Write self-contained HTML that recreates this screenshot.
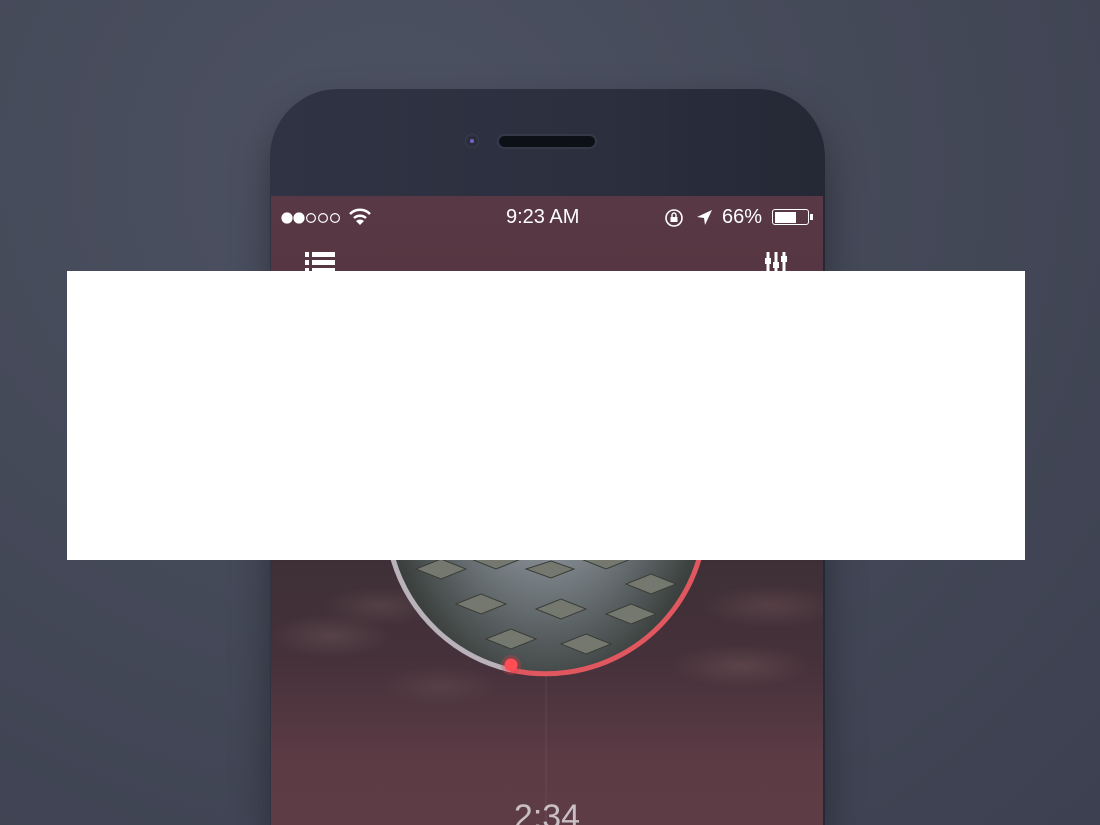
<!DOCTYPE html>
<html><head><meta charset="utf-8"><style>
html,body{margin:0;padding:0;overflow:hidden;width:1100px;height:825px}
body{position:relative;background:radial-gradient(ellipse at 35% 20%,#4d5263 0%,#454a59 45%,#3c4050 100%);font-family:"Liberation Sans",sans-serif}
.phone{position:absolute;left:270px;top:89px;width:555px;height:736px;border-radius:68px 68px 0 0;background:linear-gradient(90deg,#2f3343,#2b2f3e 60%,#252835);box-shadow:0 20px 40px rgba(0,0,0,.35)}
.screen{position:absolute;left:271px;top:196px;width:552px;height:629px;overflow:hidden;background:linear-gradient(180deg,#583845 0%,#53353f 20%,#4b3038 55%,#5a3a44 80%,#5e3c46 100%)}
.cam{position:absolute;left:466px;top:135px;width:12px;height:12px;border-radius:50%;background:#2a2d3a;box-shadow:0 0 0 1px #3a3e4c}
.cam:after{content:"";position:absolute;left:4px;top:4px;width:4px;height:4px;border-radius:50%;background:#7a5fcf}
.spk{position:absolute;left:499px;top:136px;width:96px;height:11px;border-radius:6px;background:#0e1018;box-shadow:0 0 0 2px #363a48}
.st{position:absolute;top:206px;color:#fff;font-size:20px}
.white{position:absolute;left:67px;top:271px;width:958px;height:289px;background:#fff}
</style></head><body>
<div class="phone"></div>
<div class="cam"></div><div class="spk"></div>
<div class="screen">
 <div style="position:absolute;left:0;top:360px;width:552px;height:200px;background:
 radial-gradient(ellipse 60px 22px at 60px 80px,rgba(120,100,100,.35),transparent),
 radial-gradient(ellipse 60px 20px at 110px 50px,rgba(120,100,100,.3),transparent),
 radial-gradient(ellipse 70px 22px at 470px 110px,rgba(130,100,100,.35),transparent),
 radial-gradient(ellipse 70px 22px at 500px 50px,rgba(130,100,100,.3),transparent),
 radial-gradient(ellipse 60px 20px at 170px 130px,rgba(120,100,100,.25),transparent),
 linear-gradient(180deg,#3e2f36,#45313a 50%,rgba(80,52,62,0) 100%)"></div>
 <div style="position:absolute;left:115px;top:158px;width:320px;height:320px;border-radius:50%;overflow:hidden;background:radial-gradient(ellipse at 50% 20%,#b8c0c8,#7e868c 40%,#3d4240 75%,#262a29 100%)">
  <svg width="320" height="320" style="position:absolute;left:0;top:0">
   <g fill="#75786f" stroke="#3a3c38">
   <polygon points="30,215 55,205 80,215 55,225"/><polygon points="85,205 110,195 135,205 110,215"/>
   <polygon points="140,215 165,207 188,215 165,224"/><polygon points="195,205 220,195 245,205 220,215"/>
   <polygon points="240,230 265,220 290,230 265,240"/><polygon points="70,250 95,240 120,250 95,260"/>
   <polygon points="150,255 175,245 200,255 175,265"/><polygon points="220,260 245,250 270,260 245,270"/>
   <polygon points="100,285 125,275 150,285 125,295"/><polygon points="175,290 200,280 225,290 200,300"/>
   </g>
  </svg>
 </div>
 <svg width="552" height="629" style="position:absolute;left:0;top:0">
  <path d="M122 363 A160 160 0 0 0 240 474" fill="none" stroke="#b9b2bb" stroke-width="5"/>
  <path d="M240 474 A160 160 0 0 0 428 363" fill="none" stroke="#e0575f" stroke-width="5"/>
  <circle cx="240" cy="469" r="10" fill="rgba(230,60,70,.3)"/>
  <circle cx="240" cy="469" r="6.5" fill="#ff4d55"/>
  <line x1="275" y1="478" x2="275" y2="629" stroke="rgba(200,180,190,.12)"/>
 </svg>
 <div style="position:absolute;left:0;top:602px;width:552px;text-align:center;color:#c9bfc4;font-size:34px;font-weight:300">2:34</div>
 <div style="position:absolute;left:34px;top:56px;width:30px">
  <div style="height:5px;background:#fff;margin-bottom:3px"></div><div style="height:5px;background:#fff;margin-bottom:3px"></div><div style="height:5px;background:#fff"></div>
 </div>
 <div style="position:absolute;left:38px;top:56px;width:3px;height:22px;background:#583845"></div>
 <svg width="26" height="20" style="position:absolute;left:493px;top:56px"><g stroke="#fff" stroke-width="3"><line x1="4" y1="0" x2="4" y2="20"/><line x1="12" y1="0" x2="12" y2="20"/><line x1="20" y1="0" x2="20" y2="20"/></g><rect x="1" y="6" width="6" height="6" fill="#fff"/><rect x="9" y="10" width="6" height="6" fill="#fff"/><rect x="17" y="4" width="6" height="6" fill="#fff"/></svg>
</div>
<svg width="60" height="14" style="position:absolute;left:281px;top:211px"><g fill="#fff" stroke="#fff" stroke-width="1.2"><circle cx="6" cy="7" r="5"/><circle cx="18" cy="7" r="5"/><circle cx="30" cy="7" r="4.4" fill="none"/><circle cx="42" cy="7" r="4.4" fill="none"/><circle cx="54" cy="7" r="4.4" fill="none"/></g></svg>
<svg width="22" height="18" style="position:absolute;left:349px;top:208px"><path d="M1 6 A14 14 0 0 1 21 6" fill="none" stroke="#fff" stroke-width="2.5"/><path d="M5 10 A9 9 0 0 1 17 10" fill="none" stroke="#fff" stroke-width="2.5"/><path d="M11 17 L7 13 A6 6 0 0 1 15 13 Z" fill="#fff"/></svg>
<div class="st" style="left:506px">9:23 AM</div>
<svg width="20" height="20" style="position:absolute;left:665px;top:208px"><circle cx="9" cy="10" r="8" fill="none" stroke="#fff" stroke-width="1.6"/><rect x="5.5" y="9" width="7" height="5" fill="#fff"/><path d="M7 9 V7 A2 2 0 0 1 11 7 V9" fill="none" stroke="#fff" stroke-width="1.4"/></svg>
<svg width="18" height="18" style="position:absolute;left:696px;top:209px"><path d="M16 1 L1 8 L8 9 L9 16 Z" fill="#fff"/></svg>
<div class="st" style="left:722px">66%</div>
<div style="position:absolute;left:772px;top:209px;width:37px;height:16px;border:1.5px solid #fff;border-radius:3px;box-sizing:border-box;padding:1.5px"><div style="width:66%;height:100%;background:#fff"></div></div>
<div style="position:absolute;left:810px;top:214px;width:3px;height:6px;background:#fff"></div>
<div class="white"></div>
</body></html>
